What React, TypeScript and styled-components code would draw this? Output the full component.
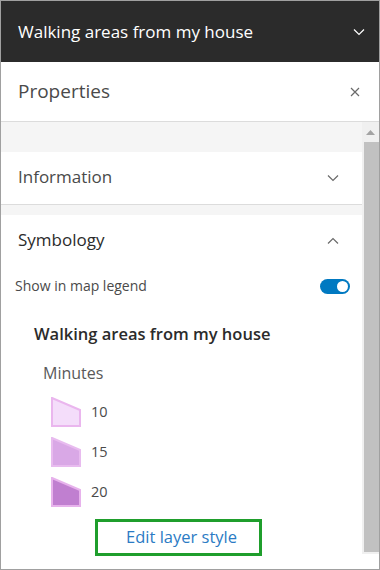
import React from "react";
import styled, { createGlobalStyle } from "styled-components";

const GlobalStyle = createGlobalStyle`
  html, body {
    margin: 0;
    padding: 0;
    background: #fff;
  }
  body {
    font-family: "Open Sans", "Noto Sans", sans-serif;
  }
`;

const Frame = styled.div`
  width: 380px;
  height: 570px;
  box-sizing: border-box;
  border: 1px solid #a0a0a0;
  display: flex;
  flex-direction: column;
  overflow: hidden;
  background: #fff;
`;

const TitleBar = styled.div`
  height: 61px;
  flex: none;
  background: #2b2b2b;
  color: #fff;
  display: flex;
  align-items: center;
  justify-content: space-between;
  padding: 0 14px 0 17px;
`;

const TitleText = styled.div`
  font-size: 17px;
`;

const PanelHeader = styled.div`
  height: 60px;
  flex: none;
  box-sizing: border-box;
  border-bottom: 1px solid #dcdcdc;
  display: flex;
  align-items: center;
  justify-content: space-between;
  padding: 0 19px 0 17px;
`;

const PanelTitle = styled.div`
  font-size: 19px;
  color: #4a4a4a;
  margin-top: -2px;
`;

const Body = styled.div`
  flex: 1;
  display: flex;
  min-height: 0;
`;

const Content = styled.div`
  flex: 1;
  display: flex;
  flex-direction: column;
  background: #f5f5f5;
  padding-top: 30px;
  gap: 10px;
`;

const Card = styled.section<{ $grow?: boolean }>`
  background: #fff;
  flex: ${(p) => (p.$grow ? 1 : "none")};
  border-bottom: ${(p) => (p.$grow ? "none" : "1px solid #dcdcdc")};
`;

const CardHeader = styled.div`
  height: 52px;
  display: flex;
  align-items: center;
  justify-content: space-between;
  padding: 0 23px 0 17px;
`;

const CardTitle = styled.div<{ $dark?: boolean }>`
  font-size: 17px;
  margin-top: -4px;
  color: ${(p) => (p.$dark ? "#2b2b2b" : "#4a4a4a")};
`;

const LegendToggleRow = styled.div`
  display: flex;
  align-items: center;
  justify-content: space-between;
  padding: 5px 12px 0 14px;
  height: 28px;
`;

const SmallLabel = styled.div`
  font-size: 14px;
  color: #4a4a4a;
  margin-top: -2px;
`;

const Toggle = styled.div`
  width: 30px;
  height: 15px;
  border-radius: 8px;
  background: #0079c1;
  display: flex;
  align-items: center;
  justify-content: flex-end;
  padding: 0 2px;
  box-sizing: border-box;
`;

const Knob = styled.div`
  width: 11px;
  height: 11px;
  border-radius: 50%;
  background: #fff;
`;

const Legend = styled.div`
  padding: 22px 0 0 33px;
  display: flex;
  flex-direction: column;
`;

const LegendTitle = styled.div`
  font-size: 16.5px;
  font-weight: 600;
  color: #2b2b2b;
`;

const FieldName = styled.div`
  font-size: 16px;
  color: #595959;
  margin: 17px 0 0 9px;
`;

const ClassList = styled.div`
  display: flex;
  flex-direction: column;
  gap: 10px;
  margin: 13px 0 0 17px;
`;

const ClassRow = styled.div`
  display: flex;
  align-items: center;
  gap: 10px;
  height: 30px;
`;

const ClassLabel = styled.div`
  font-size: 14.5px;
  color: #4a4a4a;
  margin-top: -1px;
`;

const EditButton = styled.button`
  align-self: flex-start;
  margin: 12px 0 0 61px;
  width: 167px;
  height: 37px;
  box-sizing: border-box;
  border: 3px solid #1f9e2c;
  background: #fff;
  color: #2b7bc4;
  font-family: inherit;
  font-size: 16.5px;
  padding: 0 0 2px 6px;
  cursor: pointer;
`;

const Scrollbar = styled.div`
  width: 17px;
  flex: none;
  margin-bottom: 15px;
  background: #f0f0f0;
  display: flex;
  flex-direction: column;
  align-items: flex-end;
`;

const ScrollArrow = styled.div`
  height: 20px;
  width: 100%;
  display: flex;
  align-items: center;
  justify-content: center;
`;

const Thumb = styled.div`
  flex: 1;
  width: 15px;
  margin-bottom: 2px;
  background: #c1c1c1;
`;

const Chevron = ({ up, color = "#6a6a6a" }: { up?: boolean; color?: string }) => (
  <svg width="12" height="8" viewBox="0 0 12 8">
    <path
      d={up ? "M1 6.5 L6 1.5 L11 6.5" : "M1 1.5 L6 6.5 L11 1.5"}
      fill="none"
      stroke={color}
      strokeWidth="1.2"
    />
  </svg>
);

const CloseIcon = () => (
  <svg width="10" height="10" viewBox="0 0 10 10">
    <path d="M1 1 L9 9 M9 1 L1 9" stroke="#6a6a6a" strokeWidth="1.2" fill="none" />
  </svg>
);

const classes = [
  { label: "10", fill: "#f4ddfa", stroke: "#eab6ee" },
  { label: "15", fill: "#d9a8e6", stroke: "#e8bbef" },
  { label: "20", fill: "#c07fd0", stroke: "#e7b2ec" },
];

const Swatch = ({ fill, stroke }: { fill: string; stroke: string }) => (
  <svg width="30" height="30" viewBox="0 0 30 30">
    <polygon points="1,1 29,13 29,29 1,29" fill={fill} stroke={stroke} strokeWidth="2" />
  </svg>
);

export default function App() {
  return (
    <>
      <GlobalStyle />
      <Frame>
        <TitleBar>
          <TitleText>Walking areas from my house</TitleText>
          <Chevron color="#ffffff" />
        </TitleBar>
        <PanelHeader>
          <PanelTitle>Properties</PanelTitle>
          <CloseIcon />
        </PanelHeader>
        <Body>
          <Content>
            <Card>
              <CardHeader>
                <CardTitle>Information</CardTitle>
                <Chevron />
              </CardHeader>
            </Card>
            <Card $grow>
              <CardHeader>
                <CardTitle $dark>Symbology</CardTitle>
                <Chevron up />
              </CardHeader>
              <LegendToggleRow>
                <SmallLabel>Show in map legend</SmallLabel>
                <Toggle>
                  <Knob />
                </Toggle>
              </LegendToggleRow>
              <Legend>
                <LegendTitle>Walking areas from my house</LegendTitle>
                <FieldName>Minutes</FieldName>
                <ClassList>
                  {classes.map((c) => (
                    <ClassRow key={c.label}>
                      <Swatch fill={c.fill} stroke={c.stroke} />
                      <ClassLabel>{c.label}</ClassLabel>
                    </ClassRow>
                  ))}
                </ClassList>
                <EditButton type="button">Edit layer style</EditButton>
              </Legend>
            </Card>
          </Content>
          <Scrollbar>
            <ScrollArrow>
              <svg width="9" height="5" viewBox="0 0 9 5">
                <polygon points="0,5 4.5,0 9,5" fill="#a3a3a3" />
              </svg>
            </ScrollArrow>
            <Thumb />
          </Scrollbar>
        </Body>
      </Frame>
    </>
  );
}
